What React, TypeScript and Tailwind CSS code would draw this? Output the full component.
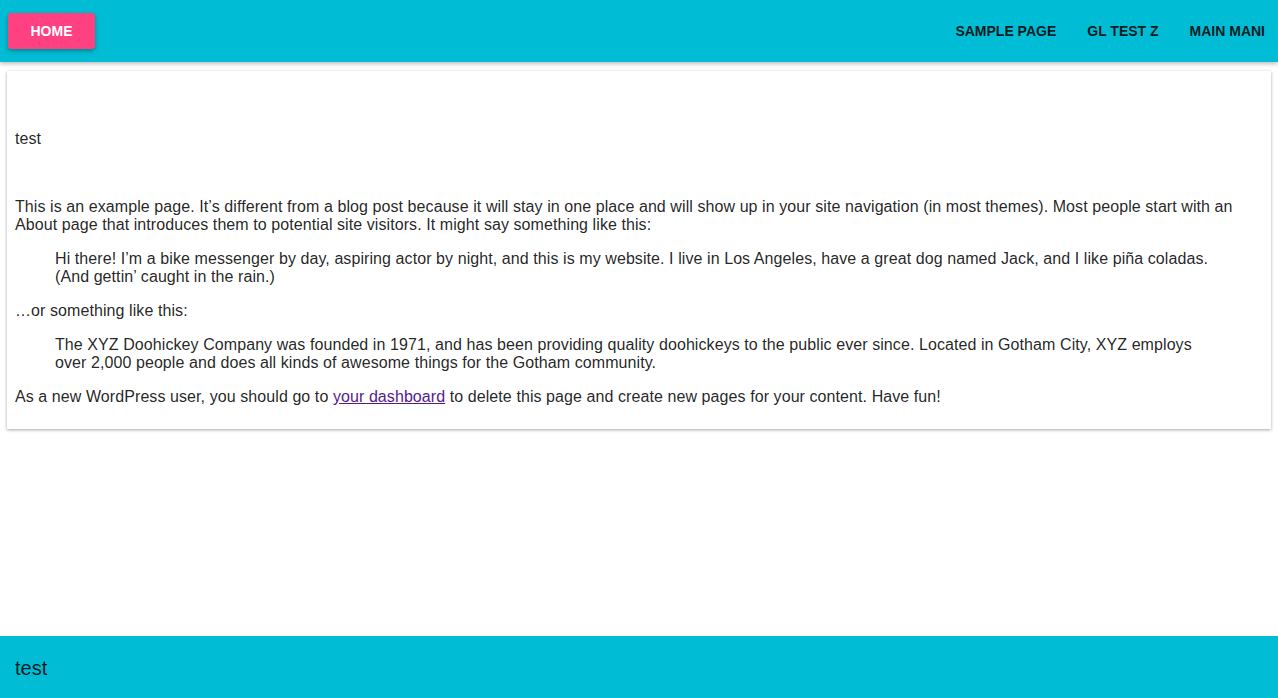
export default function App() {
  return (
    <div className="min-h-screen flex flex-col bg-white text-[rgba(0,0,0,0.87)] font-['Liberation_Sans',Arial,sans-serif]">
      {/* Top bar */}
      <header className="h-[62px] bg-[#00bcd4] flex items-center justify-between pl-2 pr-[13px] shadow-[0_2px_4px_rgba(0,0,0,0.25)] relative z-10">
        <button className="h-9 w-[87px] rounded-[3px] bg-[#ff4081] text-white text-sm font-semibold shadow-[0_2px_4px_rgba(0,0,0,0.3)]">
          HOME
        </button>
        <nav className="flex items-center gap-[31px] text-sm font-semibold text-[rgba(0,0,0,0.87)]">
          <a href="#">SAMPLE PAGE</a>
          <a href="#">GL TEST Z</a>
          <a href="#">MAIN MANI</a>
        </nav>
      </header>

      {/* Page card */}
      <main className="flex-1 px-[7px] pt-[9px]">
        <article className="bg-white px-2 pt-px pb-[23px] shadow-[0_1px_3px_rgba(0,0,0,0.35)] text-base leading-[18px] tracking-[0.08px]">
          <div className="pt-[58px] pb-[50px]">test</div>
          <p className="mb-4">
            This is an example page. It’s different from a blog post because it will stay in one place and will show up in your site navigation (in most themes). Most people start with an About page that introduces them to potential site visitors. It might say something like this:
          </p>
          <blockquote className="mx-10 mb-4">
            <p>
              Hi there! I’m a bike messenger by day, aspiring actor by night, and this is my website. I live in Los Angeles, have a great dog named Jack, and I like piña coladas. (And gettin’ caught in the rain.)
            </p>
          </blockquote>
          <p className="mb-4">…or something like this:</p>
          <blockquote className="mx-10 mb-4">
            <p>
              The XYZ Doohickey Company was founded in 1971, and has been providing quality doohickeys to the public ever since. Located in Gotham City, XYZ employs over 2,000 people and does all kinds of awesome things for the Gotham community.
            </p>
          </blockquote>
          <p>
            As a new WordPress user, you should go to{' '}
            <a href="#" className="text-[#551a8b] underline">your dashboard</a>{' '}
            to delete this page and create new pages for your content. Have fun!
          </p>
        </article>
      </main>

      {/* Footer */}
      <footer className="h-[62px] bg-[#00bcd4] flex items-center px-[15px] pt-[2px] text-xl">
        test
      </footer>
    </div>
  );
}
